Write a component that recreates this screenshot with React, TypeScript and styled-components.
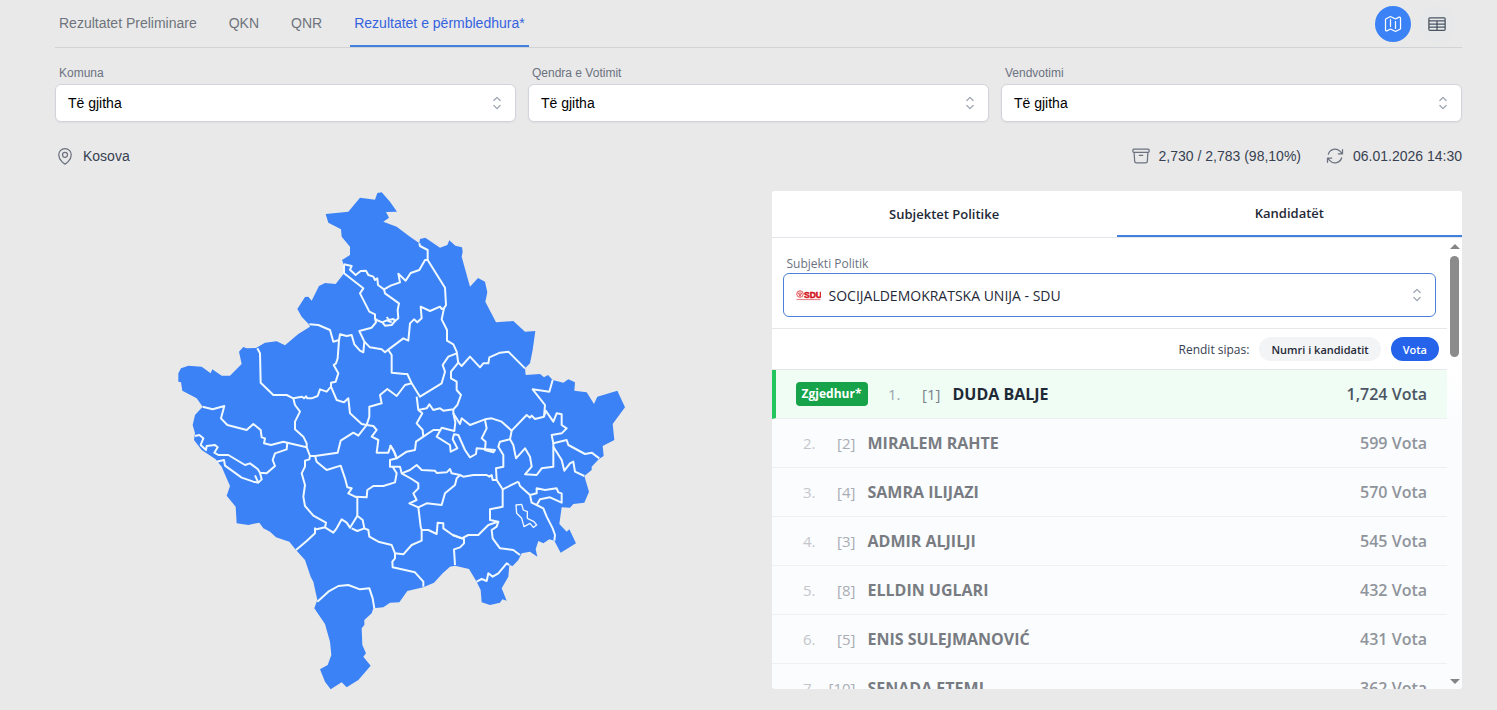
import React, { useState } from "react";
import styled, { createGlobalStyle, css } from "styled-components";
import {
  HiChevronUpDown,
  HiOutlineArchiveBox,
  HiOutlineArrowPath,
  HiOutlineMap,
  HiOutlineMapPin,
  HiOutlineTableCells,
} from "react-icons/hi2";

const sans = '"Liberation Sans", Arial, sans-serif';
const humanist = '"Open Sans", "Noto Sans", sans-serif';

const GlobalStyle = createGlobalStyle`
  *, *::before, *::after { box-sizing: border-box; }
  body { margin: 0; background: #e9e9e9; font-family: ${sans}; color: #374151; }
  button, select { font: inherit; color: inherit; }
`;

const Page = styled.main`
  padding: 0 35px 20px 55px;
`;

const TopBar = styled.header`
  display: flex;
  justify-content: space-between;
  align-items: stretch;
  height: 48px;
  border-bottom: 1px solid #d1d3d6;
`;

const Tabs = styled.nav`
  display: flex;
  gap: 24px;
`;

const Tab = styled.a<{ $active?: boolean }>`
  display: flex;
  align-items: center;
  padding: 0 4px;
  font-size: 14px;
  text-decoration: none;
  color: ${(p) => (p.$active ? "#3563e0" : "#6f747c")};
  border-bottom: 2px solid ${(p) => (p.$active ? "#4280de" : "transparent")};
`;

const ViewSwitch = styled.div`
  display: flex;
  align-items: center;
  gap: 8px;
  padding-right: 7px;
`;

const ViewButton = styled.button<{ $active?: boolean }>`
  display: grid;
  place-items: center;
  width: 36px;
  height: 36px;
  padding: 0;
  border: 0;
  border-radius: 50%;
  font-size: 20px;
  color: ${(p) => (p.$active ? "#fff" : "#4b5563")};
  background: ${(p) => (p.$active ? "#3b82f6" : "#e7e8ea")};
`;

const Filters = styled.section`
  display: grid;
  grid-template-columns: repeat(3, 1fr);
  gap: 12px;
  padding-top: 16px;
`;

const Field = styled.div`
  display: flex;
  flex-direction: column;
  gap: 2px;
`;

const Label = styled.label`
  padding: 0 4px;
  font-size: 12px;
  line-height: 18px;
  color: #6b7280;
`;

const SelectBox = styled.div`
  position: relative;
  color: #9ca3af;

  > svg:last-child {
    position: absolute;
    right: 9px;
    top: 50%;
    margin-top: -10px;
    font-size: 20px;
    pointer-events: none;
  }
`;

const Select = styled.select<{ $party?: boolean }>`
  appearance: none;
  display: block;
  width: 100%;
  height: 38px;
  padding: 0 40px 0 12px;
  border: 1px solid #d1d5db;
  border-radius: 6px;
  outline: none;
  background: #fff;
  box-shadow: 0 1px 2px rgba(0, 0, 0, 0.05);
  font-size: 14px;
  color: #000;

  ${(p) =>
    p.$party &&
    css`
      height: 44px;
      padding-left: 45px;
      border-color: #4c7fd6;
      box-shadow: none;
      font-weight: 500;
      color: #1f2937;
    `}
`;

const PartyLogo = styled.svg`
  position: absolute;
  left: 13px;
  top: 50%;
  margin-top: -6px;
  width: 25px;
  height: 12px;
  pointer-events: none;
`;

const Summary = styled.section`
  display: flex;
  justify-content: space-between;
  padding: 24px 0 25px;
`;

const Facts = styled.div`
  display: flex;
  gap: 24px;
`;

const Fact = styled.span`
  display: flex;
  align-items: center;
  gap: 8px;
  font-size: 14px;
  line-height: 20px;

  svg {
    font-size: 20px;
    color: #6b7280;
  }
`;

const Content = styled.section`
  display: grid;
  grid-template-columns: 1fr 1fr;
  gap: 24px;
`;

const MapArea = styled.div`
  display: flex;
  justify-content: center;
  align-items: flex-start;

  svg {
    width: 460px;
    max-width: 100%;
  }
`;

const Panel = styled.section`
  display: flex;
  flex-direction: column;
  height: calc(100vh - 212px);
  min-height: 320px;
  margin-left: 1px;
  overflow: hidden;
  border-radius: 2px 2px 4px 4px;
  background: #fff;
  font-family: ${humanist};
`;

const PanelTabs = styled.div`
  display: flex;
  flex: none;
  height: 47px;
  border-bottom: 1px solid #e2e5e9;
`;

const PanelTab = styled.button<{ $active?: boolean }>`
  flex: 1;
  padding: 0;
  border: 0;
  border-bottom: ${(p) => (p.$active ? "2px solid #4280de" : "0")};
  background: none;
  font-size: 13px;
  font-weight: 600;
  color: #1f2937;
`;

const ScrollArea = styled.div`
  display: flex;
  flex: 1;
  min-height: 0;
  background: #fbfcfe;
`;

const Scroller = styled.div`
  flex: 1;
  overflow-y: auto;
  scrollbar-width: none;
`;

const Rail = styled.div`
  display: flex;
  flex-direction: column;
  justify-content: space-between;
  align-items: center;
  width: 15px;
  padding: 6px 0 5px;
  background: linear-gradient(#fff, #fff 130px, #fbfcfe 190px);
`;

const Arrow = styled.span<{ $down?: boolean }>`
  border: 5px solid transparent;
  border-top-width: ${(p) => (p.$down ? "5px" : "0")};
  border-bottom-width: ${(p) => (p.$down ? "0" : "5px")};
  border-top-color: #858585;
  border-bottom-color: #858585;
`;

const Thumb = styled.span`
  width: 9px;
  height: 101px;
  margin: 7px 0 auto;
  border-radius: 5px;
  background: #8b8b8b;
`;

const PartyField = styled(Field)`
  gap: 0;
  padding: 17px 11px 11px;
  border-bottom: 1px solid #e5e7eb;
  background: #fff;
`;

const SortBar = styled.div`
  display: flex;
  justify-content: flex-end;
  align-items: center;
  gap: 10px;
  height: 41px;
  padding-right: 8px;
  border-bottom: 1px solid #e5e7eb;
  background: #fff;
  font-size: 12px;
  color: #374151;
`;

const Pill = styled.button<{ $active?: boolean }>`
  height: 24px;
  padding: 0 12px;
  border: 0;
  border-radius: 12px;
  font-size: 11px;
  font-weight: 600;
  color: ${(p) => (p.$active ? "#fff" : "#1f2937")};
  background: ${(p) => (p.$active ? "#2563eb" : "#f3f4f6")};
`;

const List = styled.ol`
  margin: 0;
  padding: 0;
  list-style: none;
`;

const Row = styled.li<{ $elected?: boolean }>`
  display: flex;
  align-items: center;
  height: 49px;
  padding: 0 20px;
  border-bottom: 1px solid #eef0f2;
  border-left: ${(p) => (p.$elected ? "4px solid #22c55e" : "0")};
  background: ${(p) => (p.$elected ? "#effdf4" : "#fbfcfe")};
  font-size: 15px;
  --rank: ${(p) => (p.$elected ? "#9ca3af" : "#c3c6cb")};
  --number: ${(p) => (p.$elected ? "#7b828c" : "#a9adb3")};
  --name: ${(p) => (p.$elected ? "#1f2937" : "#787c82")};
  --votes: ${(p) => (p.$elected ? "#4b5563" : "#8f949b")};
`;

const Badge = styled.span`
  margin-right: 9px;
  width: 72px;
  border-radius: 4px;
  background: #16a34a;
  text-align: center;
  font-size: 12px;
  line-height: 24px;
  font-weight: 700;
  color: #fff;
`;

const Rank = styled.span`
  width: 24px;
  text-align: right;
  color: var(--rank);
`;

const BallotNumber = styled.span`
  width: 40px;
  text-align: right;
  color: var(--number);
`;

const Name = styled.strong`
  flex: 1;
  padding-left: 12px;
  font-size: 16px;
  font-weight: 700;
  color: var(--name);
`;

const Votes = styled.span`
  font-size: 16px;
  font-weight: 600;
  color: var(--votes);
`;

const COUNTRY =
  "M467,87 535,80 570,38 615,44 622,24 635,22 660,50 681,80 648,81 657,98 640,110 680,125 720,155 748,175 750,162 766,158 810,188 832,180 838,166 856,182 876,187 878,200 875,215 900,305 924,279 945,290 952,322 946,350 978,412 1030,408 1065,440 1096,438 1088,495 1080,535 1065,550 1067,570 1110,567 1122,577 1134,570 1148,585 1180,593 1195,583 1215,592 1213,617 1250,622 1272,657 1282,635 1342,617 1365,667 1328,717 1333,765 1298,783 1301,813 1286,823 1265,845 1265,855 1243,873 1257,920 1243,953 1210,957 1200,968 1175,967 1168,1017 1190,1040 1198,1033 1218,1075 1172,1103 1153,1067 1138,1063 1120,1075 1105,1068 1097,1093 1102,1115 1080,1100 1055,1105 1045,1125 1028,1143 1018,1140 1015,1175 995,1210 1010,1247 997,1243 990,1253 960,1260 935,1252 932,1215 920,1190 897,1152 855,1142 840,1145 818,1165 792,1193 760,1207 712,1218 688,1252 660,1253 640,1267 610,1270 605,1285 583,1305 583,1320 575,1330 577,1380 588,1405 580,1415 602,1442 565,1485 530,1507 515,1492 482,1513 465,1490 450,1453 473,1440 484,1410 480,1370 465,1317 433,1270 442,1245 430,1190 422,1175 405,1125 378,1095 358,1070 318,1057 300,1040 280,1030 268,1013 235,1020 200,1015 197,965 170,932 180,903 155,845 137,823 95,795 72,765 75,745 68,720 75,690 98,665 80,640 37,617 33,592 25,590 25,565 33,550 55,542 95,545 122,565 127,553 155,572 180,572 215,537 207,500 220,486 230,490 258,489 285,473 320,469 345,481 385,447 420,425 415,416 395,395 382,372 405,336 415,335 425,347 447,303 465,294 497,297 520,268 520,235 516,225 540,210 540,185 515,155 513,133 475,113Z";

const BORDERS = [
  "M522,238 545,243 540,254 557,270 572,258 588,257 595,270 610,275 615,285 622,280 624,300 642,313 662,302 690,292 685,266 707,287 722,264 748,255 765,225 773,225 773,195 750,183 748,175",
  "M773,225 825,308 828,360 822,370 815,403 831,435 831,467 850,478 860,500 865,535",
  "M642,313 645,325 687,355 683,375 685,400 675,408 665,420 645,422 637,412 620,405 615,400 615,388 598,380 570,325 580,310 522,265 522,238",
  "M637,412 650,406 665,412 M650,396 657,405 670,402 677,410",
  "M615,400 618,412 605,428 568,438 583,470 580,502 570,497 553,478 545,450 530,453 510,448 507,465 490,470 480,435 445,420 418,418",
  "M507,465 503,520 498,535 491,540 505,565 497,590 483,593 483,605 470,620 450,613 443,633 425,640 412,640 408,634 402,640 396,635 370,640 350,630 310,630 272,593 270,505 262,490",
  "M583,470 600,487 635,493 645,502 660,490 680,475 700,460 715,467 720,415 732,403 742,412 755,400 752,365 780,378 810,365 815,372 822,370",
  "M655,495 665,510 665,563 705,567 712,567 725,595 750,635 815,595 825,560 818,540 835,515 860,505",
  "M725,595 705,600 680,633 652,612 630,630 635,655 598,665 598,695 590,720 575,717 540,685 535,640 522,652 500,645 483,605",
  "M370,640 375,660 390,680 375,710 375,733 400,755 410,775 410,787",
  "M98,665 128,673 163,663 153,700 172,720 230,735 250,717 272,735 275,757 285,760 282,775 303,780 340,770 352,773 410,787 420,813 435,813 503,803 512,767 550,743 565,752 590,720",
  "M352,773 350,793 315,805 308,825 315,843 290,865 270,863 263,852 240,835 225,840 200,825 175,810 145,810 133,803 143,787 135,780 110,783 108,795 92,780 100,760 88,750 75,753",
  "M140,830 162,825 165,842 215,878 250,890 265,893 275,883 270,863 M265,893 255,871",
  "M420,813 418,823 405,827 405,845 395,865 405,900 400,935 405,963 430,992 468,1013 465,1027 440,1033 435,1030 435,1045 410,1068 378,1095",
  "M435,813 440,830 470,855 512,842 525,880 532,907 545,910 535,925 555,935 562,937 562,992 578,1005 583,1030 595,1035 598,1055 625,1070 665,1080 675,1105 700,1108 725,1080 755,1067 755,1035 752,1025 745,967",
  "M465,1027 490,1043 500,1030 515,1003 530,1013 540,1028 562,992 M545,1030 562,1038 583,1030",
  "M675,1105 675,1120 667,1130 668,1147 735,1162 760,1190 760,1205",
  "M555,935 590,937 592,915 610,903 640,903 675,892 680,865 668,845 690,845 695,865 720,855 740,840 755,855 795,857 800,864 830,862 840,852 845,865 870,870 880,875 910,870 950,870 958,875 965,870 968,885 980,885 998,913 1045,890",
  "M590,720 610,723 620,735 605,755 625,765 620,803 655,803 662,782 675,805 680,820 660,825 660,845 668,845",
  "M660,780 670,795 680,820 710,800 735,795 738,770 760,755 790,735 810,735",
  "M740,635 745,675 757,685 740,715 758,735 760,755",
  "M745,675 770,670 778,658 790,675 810,670 820,677 850,673 862,660 873,630 860,615 860,590 843,580 843,560 865,533",
  "M865,533 875,543 900,515 930,547 940,535 955,535 958,517 990,503 1015,500 1065,550",
  "M1148,585 1138,620 1088,613 1125,660 1122,695 1095,702 1085,692 1080,698 1070,690 1025,737 995,710 965,700 945,703 900,720 875,700 870,717 850,685 850,673",
  "M850,685 856,712 853,738 815,728 800,755 840,780 842,800 862,790 848,763 852,748 865,750 885,795 900,817 918,807 920,790 975,795 970,802 945,795 947,770 935,760 950,730 945,705",
  "M1025,737 1020,763 990,770 985,785 1000,810 1000,845 978,850 980,885",
  "M1020,763 1030,780 1038,820 1065,790 1080,815 1085,845 1065,868 1100,870 1115,850 1150,845 1150,775",
  "M1122,695 1127,677 1150,710 1160,685 1175,688 1175,720 1190,730 1175,745 1145,750 1150,775 1190,765 1195,780 1245,807 1265,803 1288,820",
  "M1150,785 1175,825 1183,857 1200,835 1210,830 1215,860 1243,873",
  "M998,913 998,965 960,973 960,1005 985,1010 955,1020 925,1050 895,1050 875,1060 848,1050 820,1030 820,1015 803,1013 800,1047 775,1035 755,1035",
  "M848,1050 882,1062 882,1075 870,1087 852,1093 855,1140",
  "M985,1010 980,1025 965,1035 968,1060 990,1090 1030,1095 1050,1110",
  "M920,1190 935,1182 950,1188 955,1165 968,1175 985,1165 1010,1135 1018,1140",
  "M442,1250 475,1220 505,1203 535,1200 570,1213 598,1210 608,1240 613,1270",
  "M1045,890 1050,903 1080,930 1100,925 1100,910 1125,915 1160,910 1165,922 1175,925 1175,953 1140,937 1110,943 1100,960 1085,953 1080,930",
  "M1100,960 1120,970 1130,995 1148,1030 1155,1050 1153,1067",
  "M695,865 725,882 745,895 745,910 730,925 740,945 718,955 745,967 770,955 815,960 825,925 855,900 860,880 870,870",
];

const ENCLAVE =
  "M1038,960 1055,958 1060,975 1072,980 1072,1000 1092,1010 1100,1020 1090,1027 1080,1015 1062,1025 1055,1000 1040,985Z";

const CANDIDATES = [
  { number: 1, name: "DUDA BALJE", votes: "1,724", elected: true },
  { number: 2, name: "MIRALEM RAHTE", votes: "599" },
  { number: 4, name: "SAMRA ILIJAZI", votes: "570" },
  { number: 3, name: "ADMIR ALJILJI", votes: "545" },
  { number: 8, name: "ELLDIN UGLARI", votes: "432" },
  { number: 5, name: "ENIS SULEJMANOVIĆ", votes: "431" },
  { number: 10, name: "SENADA ETEMI", votes: "362" },
];

function KosovoMap() {
  return (
    <svg viewBox="3 18 1380 1500" role="img" aria-label="Kosova">
      <path d={COUNTRY} fill="#3b82f6" />
      <g fill="none" stroke="#f0f9ff" strokeWidth="6" strokeLinejoin="round">
        {BORDERS.map((d) => (
          <path key={d} d={d} />
        ))}
        <path d={ENCLAVE} strokeWidth="4" />
      </g>
    </svg>
  );
}

function FilterSelect({ id, label }: { id: string; label: string }) {
  return (
    <Field>
      <Label htmlFor={id}>{label}</Label>
      <SelectBox>
        <Select id={id}>
          <option>Të gjitha</option>
        </Select>
        <HiChevronUpDown />
      </SelectBox>
    </Field>
  );
}

function SduLogo() {
  return (
    <PartyLogo viewBox="0 0 50 24" aria-hidden="true">
      <g fill="none" stroke="#e0525a" strokeWidth="2">
        <circle cx="8" cy="10" r="6.5" />
        <path d="M4 7l4 7 4-7M8 5v10" />
      </g>
      <text
        x="16"
        y="17"
        fontFamily="Liberation Sans, Arial, sans-serif"
        fontSize="17"
        fontWeight="700"
        fill="#d4141f"
        stroke="#d4141f"
        strokeWidth="1"
      >
        SDU
      </text>
      <path d="M1 21h48" stroke="#e8888d" strokeWidth="2.5" />
    </PartyLogo>
  );
}

export default function App() {
  const [sort, setSort] = useState("votes");
  return (
    <Page>
      <GlobalStyle />
      <TopBar>
        <Tabs>
          <Tab href="#preliminare">Rezultatet Preliminare</Tab>
          <Tab href="#qkn">QKN</Tab>
          <Tab href="#qnr">QNR</Tab>
          <Tab href="#permbledhura" $active>
            Rezultatet e përmbledhura*
          </Tab>
        </Tabs>
        <ViewSwitch>
          <ViewButton $active aria-label="Harta">
            <HiOutlineMap />
          </ViewButton>
          <ViewButton aria-label="Tabela">
            <HiOutlineTableCells />
          </ViewButton>
        </ViewSwitch>
      </TopBar>

      <Filters>
        <FilterSelect id="komuna" label="Komuna" />
        <FilterSelect id="qendra" label="Qendra e Votimit" />
        <FilterSelect id="vendvotimi" label="Vendvotimi" />
      </Filters>

      <Summary>
        <Fact>
          <HiOutlineMapPin />
          Kosova
        </Fact>
        <Facts>
          <Fact>
            <HiOutlineArchiveBox />
            2,730 / 2,783 (98,10%)
          </Fact>
          <Fact>
            <HiOutlineArrowPath />
            06.01.2026 14:30
          </Fact>
        </Facts>
      </Summary>

      <Content>
        <MapArea>
          <KosovoMap />
        </MapArea>
        <Panel>
          <PanelTabs>
            <PanelTab>Subjektet Politike</PanelTab>
            <PanelTab $active>Kandidatët</PanelTab>
          </PanelTabs>
          <ScrollArea>
            <Scroller>
              <PartyField>
                <Label htmlFor="subjekti">Subjekti Politik</Label>
                <SelectBox>
                  <Select id="subjekti" $party>
                    <option>SOCIJALDEMOKRATSKA UNIJA - SDU</option>
                  </Select>
                  <SduLogo />
                  <HiChevronUpDown />
                </SelectBox>
              </PartyField>
              <SortBar>
                <span>Rendit sipas:</span>
                <Pill $active={sort === "number"} onClick={() => setSort("number")}>
                  Numri i kandidatit
                </Pill>
                <Pill $active={sort === "votes"} onClick={() => setSort("votes")}>
                  Vota
                </Pill>
              </SortBar>
              <List>
                {CANDIDATES.map((c, i) => (
                  <Row key={c.number} $elected={c.elected}>
                    {c.elected && <Badge>Zgjedhur*</Badge>}
                    <Rank>{i + 1}.</Rank>
                    <BallotNumber>[{c.number}]</BallotNumber>
                    <Name>{c.name}</Name>
                    <Votes>{c.votes} Vota</Votes>
                  </Row>
                ))}
              </List>
            </Scroller>
            <Rail aria-hidden="true">
              <Arrow />
              <Thumb />
              <Arrow $down />
            </Rail>
          </ScrollArea>
        </Panel>
      </Content>
    </Page>
  );
}
